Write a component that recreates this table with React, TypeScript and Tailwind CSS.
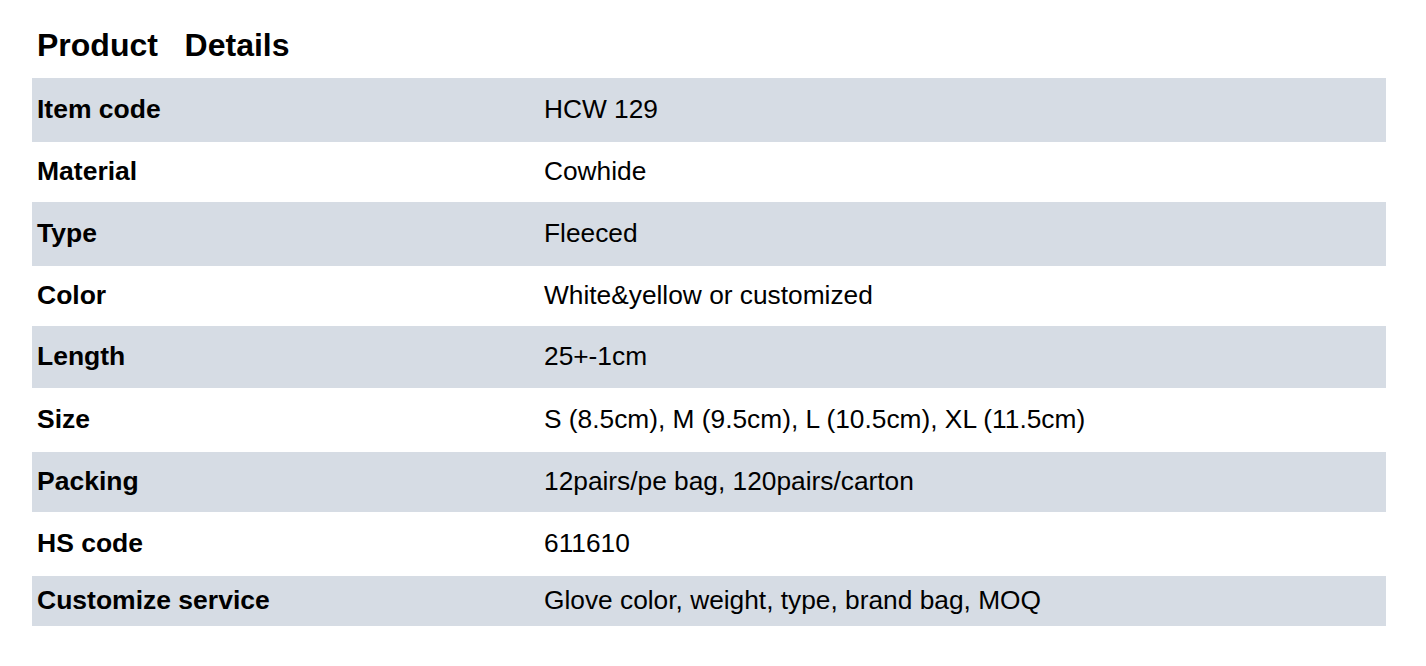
import React from "react";

const rows: { label: string; value: string; h: string; shaded: boolean }[] = [
  { label: "Item code", value: "HCW 129", h: "h-[64px]", shaded: true },
  { label: "Material", value: "Cowhide", h: "h-[60px]", shaded: false },
  { label: "Type", value: "Fleeced", h: "h-[64px]", shaded: true },
  { label: "Color", value: "White&yellow or customized", h: "h-[60px]", shaded: false },
  { label: "Length", value: "25+-1cm", h: "h-[62px]", shaded: true },
  { label: "Size", value: "S (8.5cm), M (9.5cm), L (10.5cm), XL (11.5cm)", h: "h-[64px]", shaded: false },
  { label: "Packing", value: "12pairs/pe bag, 120pairs/carton", h: "h-[60px]", shaded: true },
  { label: "HS code", value: "611610", h: "h-[64px]", shaded: false },
  { label: "Customize service", value: "Glove color, weight, type, brand bag, MOQ", h: "h-[50px]", shaded: true },
];

export default function App() {
  return (
    <div className="w-[1426px] h-[666px] bg-white text-black" style={{ fontFamily: '"Liberation Sans", Arial, Helvetica, sans-serif' }}>
      <div className="px-[32px]">
        <h1 className="pt-[27px] pl-[5px] h-[78px] text-[32px] leading-[36px] font-bold whitespace-pre">Product   Details</h1>
        <div className="w-[1354px] flex flex-col">
          {rows.map((r) => (
            <div key={r.label} className={`grid grid-cols-[512px_1fr] items-center ${r.h} ${r.shaded ? "bg-[#d6dce4]" : "bg-white"}`}>
              <div className="pl-[5px] text-[26.5px] font-bold leading-none -mt-[2px]">{r.label}</div>
              <div className="text-[26.3px] leading-none -mt-[2px]">{r.value}</div>
            </div>
          ))}
        </div>
      </div>
    </div>
  );
}
